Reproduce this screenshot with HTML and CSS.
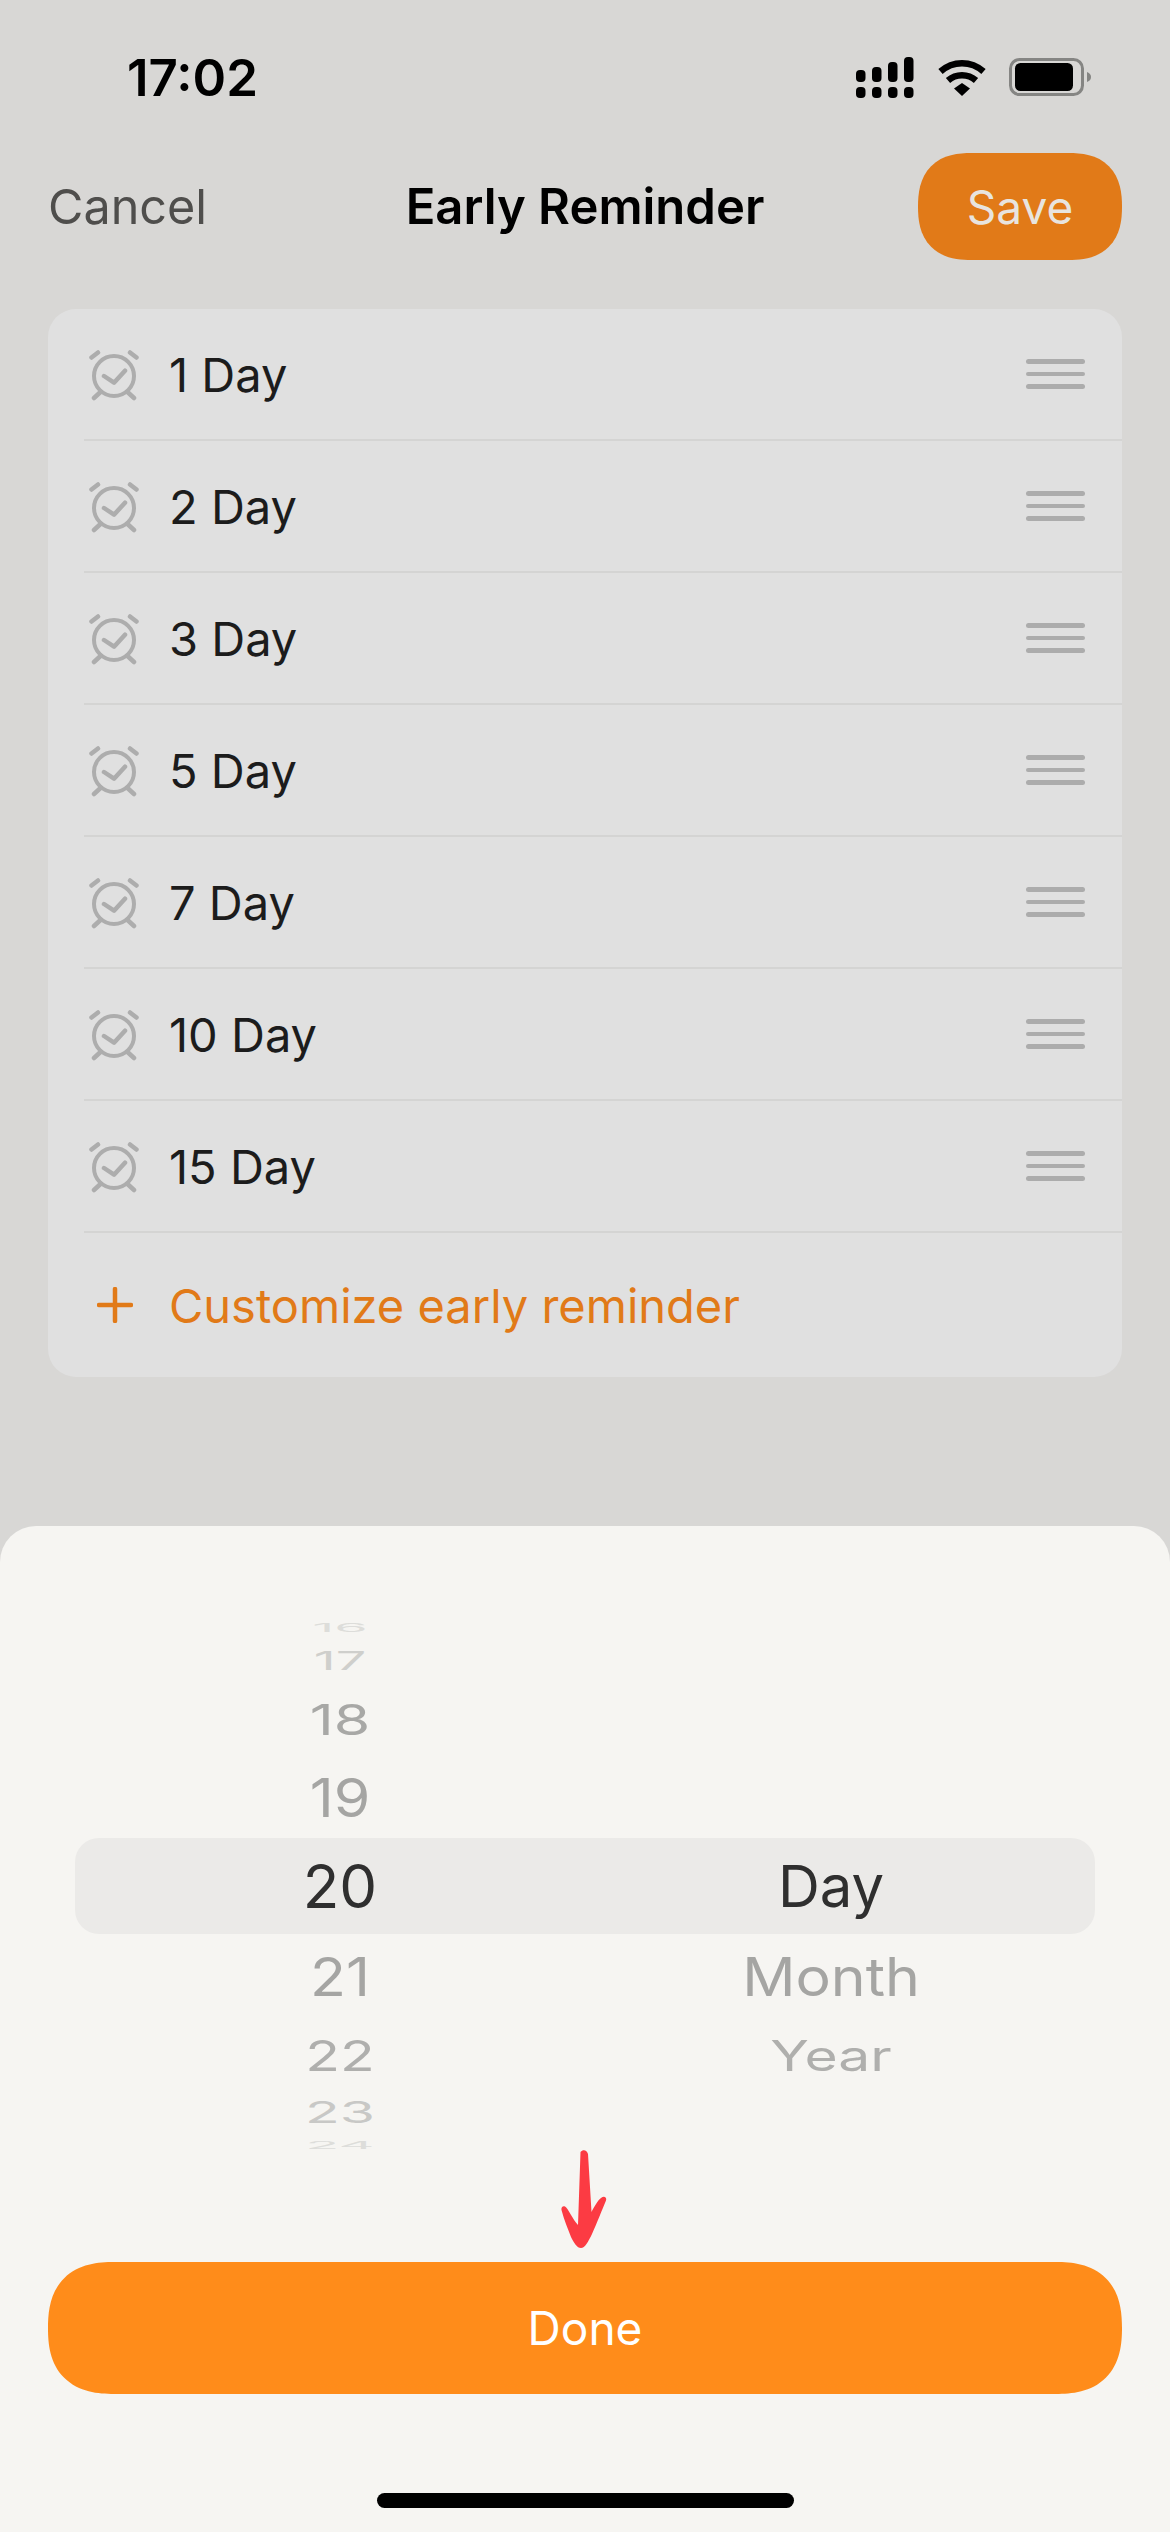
FILE: index.html
```html
<!DOCTYPE html>
<html lang="en">
<head>
<meta charset="utf-8">
<title>Early Reminder</title>
<link rel="stylesheet" href="styles.css">
</head>
<body>
<svg class="defs" width="0" height="0" aria-hidden="true">
  <symbol id="alarm" viewBox="0 0 52 52">
    <circle cx="26" cy="26" r="20" fill="none" stroke="currentColor" stroke-width="4"/>
    <path d="M16 26l10 6.700L37 20.700M3.500 7.500L10 2.500M42 2.500l6.500 5M6 48l6.500-6M39.500 42l6.500 6" fill="none" stroke="currentColor" stroke-width="4.500" stroke-linecap="round" stroke-linejoin="round"/>
  </symbol>
</svg>
<div class="screen">
  <header class="status">
    <span class="time">17:02</span>
    <div class="status-icons">
      <svg class="sig" width="58" height="41" viewBox="0 0 58 41">
        <rect x="0" y="13" width="9.500" height="12" rx="4"/><rect x="16" y="10" width="9.500" height="15" rx="4"/><rect x="32" y="5" width="9.500" height="20" rx="4"/><rect x="48" y="0" width="9.500" height="25" rx="4"/>
        <rect x="0" y="30" width="9.500" height="11" rx="4"/><rect x="16" y="30" width="9.500" height="11" rx="4"/><rect x="32" y="30" width="9.500" height="11" rx="4"/><rect x="48" y="30" width="9.500" height="11" rx="4"/>
      </svg>
      <svg class="wifi" width="50" height="37" viewBox="0 0 50 37">
        <path d="M3.500 12.500C16 1.500 34 1.500 46.500 12.500M11 21.500C19 14.500 31 14.500 39 21.500" fill="none" stroke="#000" stroke-width="6.500"/>
        <path d="M17 29.500L25 24L33 29.500L25 37Z"/>
      </svg>
      <svg class="batt" width="82" height="38" viewBox="0 0 82 38">
        <rect x="1.500" y="1.500" width="72" height="35" rx="9" fill="none" stroke="#858583" stroke-width="3"/>
        <rect x="6" y="5" width="58" height="28" rx="5.500"/>
        <path d="M78 14c3 1 4 3 4 5s-1 4-4 5z" fill="#858583"/>
      </svg>
    </div>
  </header>

  <nav class="nav">
    <span class="cancel">Cancel</span>
    <h1 class="title">Early Reminder</h1>
    <button class="save">Save</button>
  </nav>

  <section class="card">
    <div class="row"><svg class="alarm"><use href="#alarm"/></svg><span class="label">1 Day</span><span class="handle"><i></i><i></i><i></i></span></div>
    <div class="row"><svg class="alarm"><use href="#alarm"/></svg><span class="label">2 Day</span><span class="handle"><i></i><i></i><i></i></span></div>
    <div class="row"><svg class="alarm"><use href="#alarm"/></svg><span class="label">3 Day</span><span class="handle"><i></i><i></i><i></i></span></div>
    <div class="row"><svg class="alarm"><use href="#alarm"/></svg><span class="label">5 Day</span><span class="handle"><i></i><i></i><i></i></span></div>
    <div class="row"><svg class="alarm"><use href="#alarm"/></svg><span class="label">7 Day</span><span class="handle"><i></i><i></i><i></i></span></div>
    <div class="row"><svg class="alarm"><use href="#alarm"/></svg><span class="label">10 Day</span><span class="handle"><i></i><i></i><i></i></span></div>
    <div class="row"><svg class="alarm"><use href="#alarm"/></svg><span class="label">15 Day</span><span class="handle"><i></i><i></i><i></i></span></div>
    <div class="add">
      <svg class="plus" width="36" height="36" viewBox="0 0 36 36"><path d="M18 2v32M2 18h32" stroke="currentColor" stroke-width="4.500" stroke-linecap="round"/></svg>
      <span class="add-label">Customize early reminder</span>
    </div>
  </section>

  <section class="sheet">
    <div class="picker">
      <div class="col col-num">
        <div class="w w4"><span>16</span></div>
        <div class="w w3"><span>17</span></div>
        <div class="w w2"><span>18</span></div>
        <div class="w w1"><span>19</span></div>
        <div class="w sel"><span>20</span></div>
        <div class="w d1"><span>21</span></div>
        <div class="w d2"><span>22</span></div>
        <div class="w d3"><span>23</span></div>
        <div class="w d4"><span>24</span></div>
      </div>
      <div class="col col-unit">
        <div class="w w4"></div>
        <div class="w w3"></div>
        <div class="w w2"></div>
        <div class="w w1"></div>
        <div class="w sel"><span>Day</span></div>
        <div class="w d1"><span>Month</span></div>
        <div class="w d2"><span>Year</span></div>
        <div class="w d3"></div>
        <div class="w d4"></div>
      </div>
    </div>
    <svg class="arrow" width="48" height="98" viewBox="0 0 48 98">
      <path d="M19.500 2C22 -1 26 0 27 4L30.500 62C33 57 37 50 40 48C43 45.500 46 47 45 50.500C41 60 36 73 31 84C27 92 24 98 20 98C16 98 13 93 10 87C7 79 3 70 0.500 60C0 57 2 55.500 4 56.500C7 58 12 70 17 75Z" fill="#FC3B43"/>
    </svg>
    <button class="done">Done</button>
    <div class="home"></div>
  </section>
</div>
</body>
</html>
```
FILE: styles.css
```css
* { box-sizing: border-box; }
html, body { margin: 0; padding: 0; }
body { font-family: "Inter", "Liberation Sans", sans-serif; background: #D8D7D5; }
.defs { position: absolute; }

.screen { width: 1170px; height: 2532px; display: flex; flex-direction: column; overflow: hidden; background: #D8D7D5; }

.status { height: 153px; padding: 56px 79px 0 127px; display: flex; justify-content: space-between; align-items: flex-start; }
.time { font-size: 51px; font-weight: 600; line-height: 44px; color: #000; }
.status-icons { display: flex; align-items: flex-start; }
.sig { margin-top: 1px; }
.wifi { margin-left: 23px; margin-top: 3px; }
.batt { margin-left: 22px; margin-top: 2px; }

.nav { height: 107px; padding: 0 48px; display: grid; grid-template-columns: 1fr auto 1fr; align-items: center; }
.cancel { font-size: 48.500px; color: #4F4E4C; }
.title { margin: 0; font-size: 49px; font-weight: 600; color: #000; }
.save { justify-self: end; width: 204px; height: 107px; border: 0; border-radius: 53.500px; corner-shape: superellipse(1.3); background: #E17A18; color: #E8E4DF; font: 400 46px "Inter", sans-serif; }

.card { margin: 49px 48px 0; height: 1068px; background: #E0E0E0; border-radius: 28px; }
.row { height: 132px; margin-left: 36px; padding-left: 4px; padding-right: 37px; border-bottom: 2px solid #D4D4D3; display: flex; align-items: center; }
.alarm { width: 52px; height: 52px; margin-top: 3px; color: #ADADAD; flex: none; }
.label { margin-left: 29px; font-size: 47px; color: #1C1C1C; flex: 1; }
.handle { width: 59px; display: flex; flex-direction: column; gap: 8px; }
.handle i { display: block; height: 4.500px; border-radius: 3px; background: #ACACAC; }

.add { height: 144px; padding-left: 49px; display: flex; align-items: center; color: #E17A18; }
.plus { flex: none; }
.add-label { margin-left: 36px; font-size: 47px; }

.sheet { position: relative; margin-top: 149px; flex: 1; background: #F6F5F2; border-radius: 36px 36px 0 0; padding: 90px 48px 0; }
.picker { margin: 0 -21px; display: grid; grid-template-columns: 510px 510px; justify-content: center; }
.col { display: flex; flex-direction: column; }
.w { display: flex; align-items: center; justify-content: center; font-size: 59px; color: #A5A5A3; flex: none; }
.col-num .w { padding-left: 20px; }
.col-unit .w { padding-right: 18px; }
.w span { display: block; line-height: 1; }
.w.sel { height: 96px; background: #EBEAE8; color: #2F2F2F; }
.col-num .sel { font-size: 60px; border-radius: 24px 0 0 24px; }
.col-unit .sel { font-size: 58px; border-radius: 0 24px 24px 0; }
.w1 { height: 82px; }
.w1 span { transform: scaleY(0.9); }
.w2 { height: 74px; }
.w2 span { transform: scaleY(0.72); color: #A8A8A6; }
.w3 { height: 42px; }
.w3 span { transform: scaleY(0.48); color: #CFCFCC; font-size: 54px; }
.w4 { height: 24px; }
.w4 span { transform: scaleY(0.21); color: #DDDDDA; font-size: 54px; }
.d1 { height: 84px; }
.d1 span { transform: scaleY(0.9); }
.d2 { height: 74px; }
.d2 span { transform: scaleY(0.74); color: #AFAFAD; font-size: 57px; }
.d3 { height: 40px; }
.d3 span { transform: scaleY(0.52); color: #C8C8C6; font-size: 57px; }
.d4 { height: 26px; }
.d4 span { transform: scaleY(0.19); color: #DDDDDA; font-size: 56px; }

.arrow { position: absolute; left: 561px; top: 624px; }
.done { display: block; margin-top: 104px; width: 1074px; height: 132px; border: 0; border-radius: 66px; corner-shape: superellipse(1.3); background: #FF8C1A; color: #fff; font: 400 46px "Inter", sans-serif; }
.home { width: 417px; height: 15px; margin: 99px auto 0; border-radius: 8px; background: #000; }
```
